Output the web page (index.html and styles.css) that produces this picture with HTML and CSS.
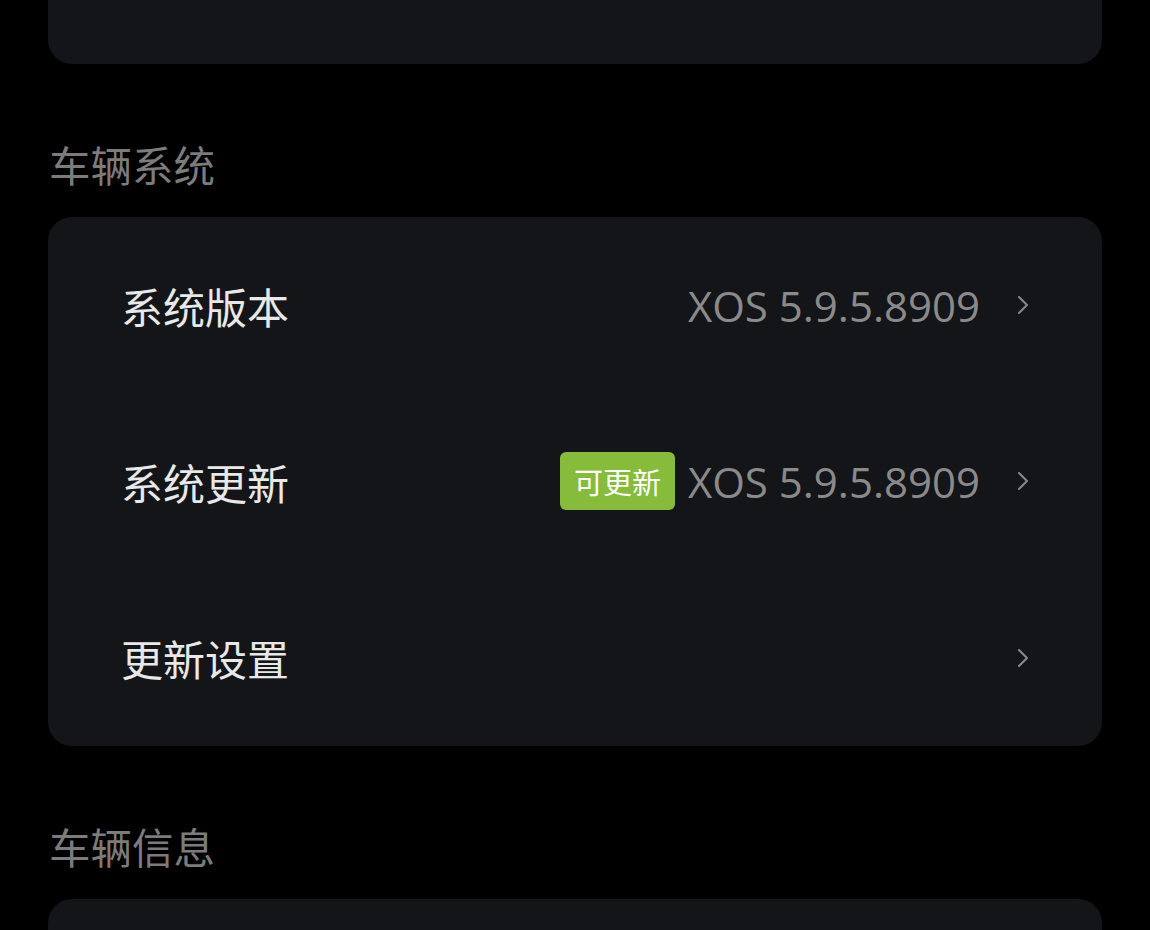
FILE: index.html
```html
<!DOCTYPE html>
<html lang="zh-CN">
<head>
<meta charset="utf-8">
<link rel="stylesheet" href="styles.css">
</head>
<body>
<div class="page">
  <div class="card card-top"></div>

  <div class="section-title">车辆系统</div>
  <div class="card">
    <div class="row">
      <span class="label">系统版本</span>
      <span class="right">
        <span class="value">XOS 5.9.5.8909</span>
        <svg class="chev" viewBox="0 0 14 24" width="14" height="24"><path d="M3 4 L11 12 L3 20" fill="none" stroke="currentColor" stroke-width="2" stroke-linecap="round" stroke-linejoin="round"/></svg>
      </span>
    </div>
    <div class="row">
      <span class="label">系统更新</span>
      <span class="right">
        <span class="badge">可更新</span>
        <span class="value">XOS 5.9.5.8909</span>
        <svg class="chev" viewBox="0 0 14 24" width="14" height="24"><path d="M3 4 L11 12 L3 20" fill="none" stroke="currentColor" stroke-width="2" stroke-linecap="round" stroke-linejoin="round"/></svg>
      </span>
    </div>
    <div class="row">
      <span class="label">更新设置</span>
      <span class="right">
        <svg class="chev" viewBox="0 0 14 24" width="14" height="24"><path d="M3 4 L11 12 L3 20" fill="none" stroke="currentColor" stroke-width="2" stroke-linecap="round" stroke-linejoin="round"/></svg>
      </span>
    </div>
  </div>

  <div class="section-title">车辆信息</div>
  <div class="card card-bottom"></div>
</div>
</body>
</html>
```
FILE: styles.css
```css
html, body {
  margin: 0;
  padding: 0;
  background: #000;
  height: 930px;
  overflow: hidden;
}
body {
  font-family: "Open Sans", "Noto Sans CJK SC", sans-serif;
}
.page {
  padding: 0 48px;
  display: flex;
  flex-direction: column;
}
.card {
  background: #141519;
  border-radius: 24px;
}
.card-top {
  height: 64px;
  border-radius: 0 0 24px 24px;
}
.card-bottom {
  height: 60px;
  border-radius: 24px 24px 0 0;
}
.section-title {
  color: #7c7c7c;
  font-size: 41.5px;
  line-height: 48px;
  padding: 76px 0 0 1px;
  height: 153px;
  box-sizing: border-box;
  font-family: "Noto Sans CJK SC", sans-serif;
}
.row {
  height: 176.3px;
  display: flex;
  align-items: center;
  justify-content: space-between;
  padding: 0 72px 0 73px;
}
.label {
  color: #e8e8e8;
  font-size: 42px;
  font-family: "Noto Sans CJK SC", sans-serif;
}
.right {
  display: flex;
  align-items: center;
}
.value {
  color: #8a8a8a;
  font-size: 42px;
  font-family: "Open Sans", sans-serif;
}
.badge {
  background: #86bb3c;
  color: #fff;
  font-size: 29px;
  font-family: "Noto Sans CJK SC", sans-serif;
  border-radius: 6px;
  height: 58px;
  line-height: 58px;
  padding: 0 14px;
  margin-right: 13px;
}
.chev {
  color: #8a8a8a;
  margin-left: 36px;
  display: block;
}
```
